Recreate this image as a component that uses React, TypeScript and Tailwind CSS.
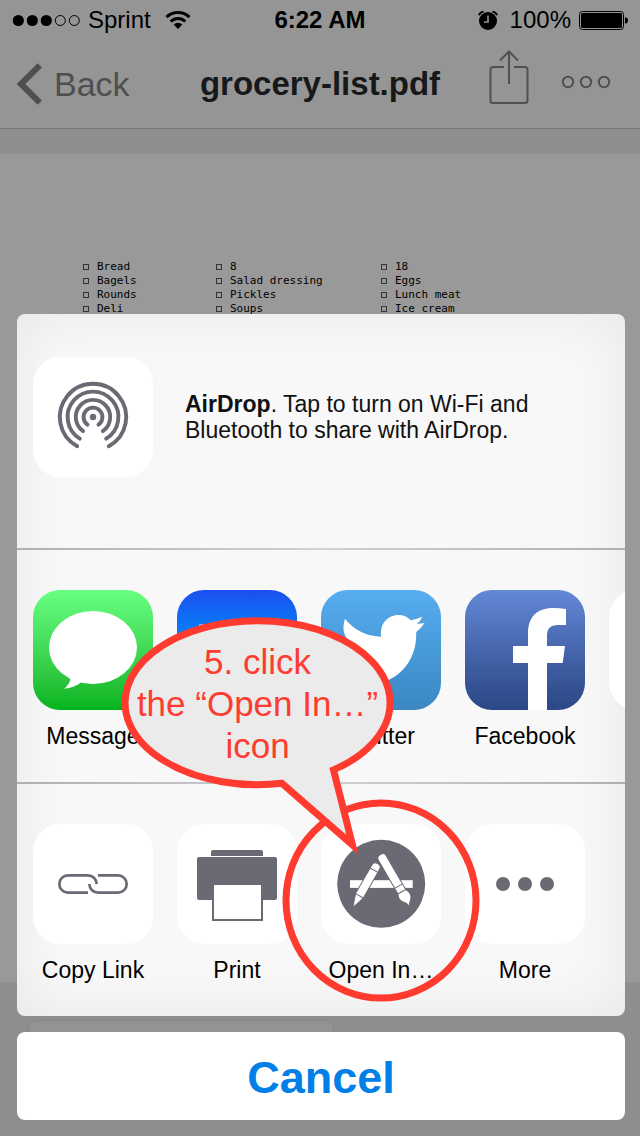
import type { ReactNode } from "react";

const groceries = [
  { width: "w-[133px]", items: ["Bread", "Bagels", "Rounds", "Deli"] },
  { width: "w-[165px]", items: ["8", "Salad dressing", "Pickles", "Soups"] },
  { width: "w-[165px]", items: ["18", "Eggs", "Lunch meat", "Ice cream"] },
];

function StatusBar() {
  return (
    <div className="grid h-10 grid-cols-[1fr_auto_1fr] items-center px-3 text-2xl text-black">
      <div className="flex items-center gap-2">
        <svg width="68" height="14" viewBox="0 0 68 14" aria-hidden="true">
          {[6, 20, 34].map((x) => (
            <circle key={x} cx={x + 0.3} cy="7.5" r="5.6" />
          ))}
          {[48, 62].map((x) => (
            <circle key={x} cx={x + 0.3} cy="7.5" r="5" fill="none" stroke="#000" />
          ))}
        </svg>
        <span>Sprint</span>
        <svg className="ml-1" width="28" height="20" viewBox="-2 0 28 20" aria-hidden="true">
          <g fill="none" stroke="#000" strokeWidth="3">
            <path d="M1.5 7.2a16.5 16.5 0 0 1 23 0" />
            <path d="M5.7 11.5a10.5 10.5 0 0 1 14.6 0" />
          </g>
          <path d="M13 19l-4.4-4.4a6.2 6.2 0 0 1 8.8 0z" />
        </svg>
      </div>
      <time className="font-bold">6:22 AM</time>
      <div className="flex items-center justify-end gap-2">
        <svg width="20" height="20" viewBox="0 0 20 20" aria-hidden="true">
          <circle cx="10" cy="11" r="9" />
          <path d="M10 5.500V12H6" fill="none" stroke="#959595" strokeWidth="1.600" />
          <path d="M1 5.300Q2 2 5.600 1.600M19 5.300Q18 2 14.400 1.600" fill="none" stroke="#000" strokeWidth="1.800" />
        </svg>
        <span className="ml-1">100%</span>
        <svg width="49" height="20" viewBox="0 0 49 20" aria-hidden="true">
          <rect x="0.500" y="1.500" width="44" height="18" rx="3" fill="none" stroke="#000" />
          <rect x="2" y="3" width="41" height="15" rx="1.500" />
          <path d="M46 7.200q3 .6 3 3.300t-3 3.300z" />
        </svg>
      </div>
    </div>
  );
}

function NavBar() {
  return (
    <nav className="grid h-[89px] grid-cols-[1fr_auto_1fr] items-center border-b border-[#777] px-4">
      <button className="flex items-center gap-3 text-[34px] leading-none text-[#4f4f4f]">
        <svg width="26" height="42" viewBox="0 0 26 42" aria-hidden="true">
          <path d="M23.800 2.300L5 21l18.800 18.700" fill="none" stroke="#4f4f4f" strokeWidth="6" />
        </svg>
        Back
      </button>
      <h1 className="text-[33px] font-bold text-[#16181a]">grocery-list.pdf</h1>
      <div className="flex items-center justify-end gap-8 pr-[13px]">
        <button aria-label="Share">
          <svg width="40" height="68" viewBox="0 0 40 68" aria-hidden="true">
            <g fill="none" stroke="#505050" strokeWidth="2">
              <path d="M15 17H4a2.500 2.500 0 0 0-2.500 2.500v31A2.500 2.500 0 0 0 4 53h32a2.500 2.500 0 0 0 2.500-2.500v-31A2.500 2.500 0 0 0 36 17H25" />
              <path d="M20 34V1.500M11 10.500l9-9 9 9" />
            </g>
          </svg>
        </button>
        <button aria-label="More actions">
          <svg width="50" height="20" viewBox="0 0 50 20" aria-hidden="true">
            <g fill="none" stroke="#505050" strokeWidth="2">
              <circle cx="7" cy="8" r="5.200" />
              <circle cx="25" cy="8" r="5.200" />
              <circle cx="43" cy="8" r="5.200" />
            </g>
          </svg>
        </button>
      </div>
    </nav>
  );
}

function Document() {
  return (
    <main className="flex-1 bg-[#999] pt-[106px] pl-[83px]">
      <div className="flex font-['DejaVu_Sans_Mono',monospace] text-[11px] leading-[14px] text-black">
        {groceries.map((column) => (
          <ul key={column.items[0]} className={column.width}>
            {column.items.map((item) => (
              <li key={item}>
                <label className="flex items-center gap-2 whitespace-nowrap">
                  <input type="checkbox" className="size-[6px] appearance-none border border-[#333]" />
                  {item}
                </label>
              </li>
            ))}
          </ul>
        ))}
      </div>
    </main>
  );
}

function MessageIcon() {
  return (
    <>
      <ellipse cx="60" cy="57.500" rx="44" ry="36.500" />
      <path d="M35 85q4 4 .800 8.500Q33.500 97 31 98.700 41 98 48 92.500z" />
    </>
  );
}

function MailIcon() {
  return (
    <>
      <rect x="22" y="34.500" width="76" height="52" rx="1" />
      <path d="M22 38l38 30 38-30" fill="none" stroke="#1f8af8" strokeWidth="2" />
    </>
  );
}

function TwitterIcon() {
  return (
    <path d="M24 28.700C33 40 45 46 60.300 46.700C58 34 67 25 77.500 25Q85 25 89.700 30.300 96 29 101.300 26.700 99.500 31.500 95.700 33.700 100 34 103.700 32.800 100.500 38 95.200 42C96 62 87 80 69 89.300C53 98 34 97 19 87Q34 88 44 80 32 78 29 68 33 69 36 68 24 64 23 51 26 53 30 53 19 44 24 28.700z" />
  );
}

function FacebookIcon() {
  return (
    <path d="M63 120V73H48V56h15V43.500C63 27 72 18 88 18q7 0 13 1v16h-8.500Q82 35 82 45.500V56h18l-2.300 17H82v47z" />
  );
}

function AirDropIcon() {
  return (
    <g fill="none" stroke="#696a73" strokeWidth="3.900" strokeLinecap="round">
      <path d="M44.200 89.200A33.200 33.200 0 1 1 75.800 89.200" />
      <path d="M46.800 81.700A25.400 25.400 0 1 1 73.200 81.700" />
      <path d="M50.100 74.100A17.200 17.200 0 1 1 69.900 74.100" />
      <path d="M54.500 67.600A9.400 9.400 0 1 1 65.500 67.600" />
      <circle cx="60" cy="60" r="3.200" fill="#696a73" stroke="none" />
    </g>
  );
}

function LinkIcon() {
  return (
    <g fill="none" stroke="#696a73" strokeWidth="2.700">
      <path d="M55 68.700H35a8.700 8.700 0 0 1 0-17.400H54.700a9 9 0 0 1 9 8.700" />
      <path d="M65 51.300H85a8.700 8.700 0 0 1 0 17.400H65.300a9 9 0 0 1-9-8.700" />
    </g>
  );
}

function PrintIcon() {
  return (
    <g fill="#696a73">
      <path d="M34 32v-4a2 2 0 0 1 2-2h48a2 2 0 0 1 2 2v4z" />
      <rect x="20" y="33" width="80" height="43" rx="2" />
      <rect x="36" y="60" width="49" height="36" fill="#fff" stroke="#696a73" strokeWidth="2" />
    </g>
  );
}

function OpenInIcon() {
  return (
    <>
      <circle cx="60.200" cy="59.800" r="44" fill="#696a73" />
      <rect x="29" y="56.200" width="62.700" height="7.700" />
      <g transform="translate(56.200 40.500) rotate(29.500)" stroke="#696a73" strokeWidth="1">
        <path d="M-4.500 3Q-4.500-1 0-1T4.500 3V36L0 49.500-4.500 36z" />
        <path d="M-4.500 6.500H4.500M-4.500 36H4.500" fill="none" />
      </g>
      <g transform="translate(60.300 32.200) rotate(-30)" stroke="#696a73" strokeWidth="1">
        <path d="M-4.500 2Q-4.500-2 0-2T4.500 2V41Q8 47 4.500 51.500 1.500 54 -1.700 58-.5 54-3.500 51.500-7.500 46-4.500 41z" />
        <path d="M-4.500 34.500H4.500M-4.500 41H4.500" fill="none" />
      </g>
    </>
  );
}

function MoreIcon() {
  return (
    <g fill="#696a73">
      <circle cx="38" cy="60" r="7" />
      <circle cx="60" cy="60" r="7" />
      <circle cx="82" cy="60" r="7" />
    </g>
  );
}

function Tile({ fill, children }: { fill: string; children?: ReactNode }) {
  return (
    <span className={`block size-[120px] shrink-0 overflow-hidden rounded-[27px] ${fill}`}>
      <svg width="120" height="120" viewBox="0 0 120 120" fill="#fff" aria-hidden="true">
        {children}
      </svg>
    </span>
  );
}

function ShareItem({ label, fill = "bg-white", children }: { label: string; fill?: string; children: ReactNode }) {
  return (
    <button className="flex w-[120px] shrink-0 flex-col items-center gap-3 text-[23px] leading-7 whitespace-nowrap text-black">
      <Tile fill={fill}>{children}</Tile>
      {label}
    </button>
  );
}

function Divider() {
  return <hr className="h-[2px] border-0 bg-linear-to-r from-[#b0b0b4] via-[#d0d0d7] to-[#b0b0b4]" />;
}

function Callout() {
  return (
    <div className="pointer-events-none absolute top-[296px] left-[103px] h-[395px] w-[365px]">
      <svg width="365" height="395" viewBox="120 610 365 395" aria-hidden="true">
        <g stroke="#ff3b30" strokeWidth="7">
          <ellipse cx="381" cy="900.500" rx="95" ry="97.500" fill="none" />
          <path
            d="M282 783.300L352.500 845 333.500 769.900A132.500 82 0 1 0 282 783.300z"
            fill="#ebebeb"
            strokeMiterlimit="10"
          />
        </g>
      </svg>
      <p className="absolute top-[31px] left-0 w-[275px] text-center text-[35px] leading-[42px] text-[#ff3b30]">
        5. click
        <br />
        the “Open In…”
        <br />
        icon
      </p>
    </div>
  );
}

function ShareSheet() {
  return (
    <section
      aria-label="Share"
      className="relative rounded-lg bg-[#f8f8f8] shadow-[inset_0_0_60px_rgba(0,0,0,0.07)]"
    >
      <div className="flex items-center gap-8 px-4 pt-[43px] pb-[71px]">
        <Tile fill="bg-white">
          <AirDropIcon />
        </Tile>
        <p className="max-w-[350px] text-[23px] leading-[26px] text-[#111]">
          <b>AirDrop</b>. Tap to turn on Wi-Fi and Bluetooth to share with AirDrop.
        </p>
      </div>
      <Divider />
      <div className="flex items-start gap-6 overflow-hidden pt-10 pb-8 pl-4">
        <ShareItem label="Message" fill="bg-linear-to-b from-[#68ff82] to-[#00b31c]">
          <MessageIcon />
        </ShareItem>
        <button aria-label="Mail" className="shrink-0">
          <Tile fill="bg-linear-to-b from-[#1d4df0] to-[#1ac8fc]">
            <MailIcon />
          </Tile>
        </button>
        <ShareItem label="Twitter" fill="bg-linear-to-b from-[#57adf0] to-[#3a87c2]">
          <TwitterIcon />
        </ShareItem>
        <ShareItem label="Facebook" fill="bg-linear-to-b from-[#6388d6] to-[#2b4785]">
          <FacebookIcon />
        </ShareItem>
        <Tile fill="bg-white" />
      </div>
      <Divider />
      <div className="flex gap-6 overflow-hidden pt-10 pb-8 pl-4">
        <ShareItem label="Copy Link">
          <LinkIcon />
        </ShareItem>
        <ShareItem label="Print">
          <PrintIcon />
        </ShareItem>
        <ShareItem label="Open In…">
          <OpenInIcon />
        </ShareItem>
        <ShareItem label="More">
          <MoreIcon />
        </ShareItem>
      </div>
      <Callout />
    </section>
  );
}

export default function App() {
  return (
    <div className="grid min-h-screen grid-cols-1 font-['Liberation_Sans',Arial,sans-serif]">
      <div className="col-start-1 row-start-1 flex flex-col bg-[#8e8e8e]">
        <header className="bg-[#959595]">
          <StatusBar />
          <NavBar />
        </header>
        <div className="h-[25px]" />
        <Document />
        <footer className="h-[154px] px-7 pt-[38px]">
          <div className="h-16 w-[306px] rounded-lg border border-[#868686] bg-[#939393]" />
        </footer>
      </div>
      <div className="col-start-1 row-start-1 flex flex-col justify-end gap-4 pt-4 pr-[15px] pb-4 pl-[17px]">
        <ShareSheet />
        <button className="h-[88px] rounded-lg bg-white pt-1 text-[45px] font-bold text-[#007fe8]">Cancel</button>
      </div>
    </div>
  );
}
